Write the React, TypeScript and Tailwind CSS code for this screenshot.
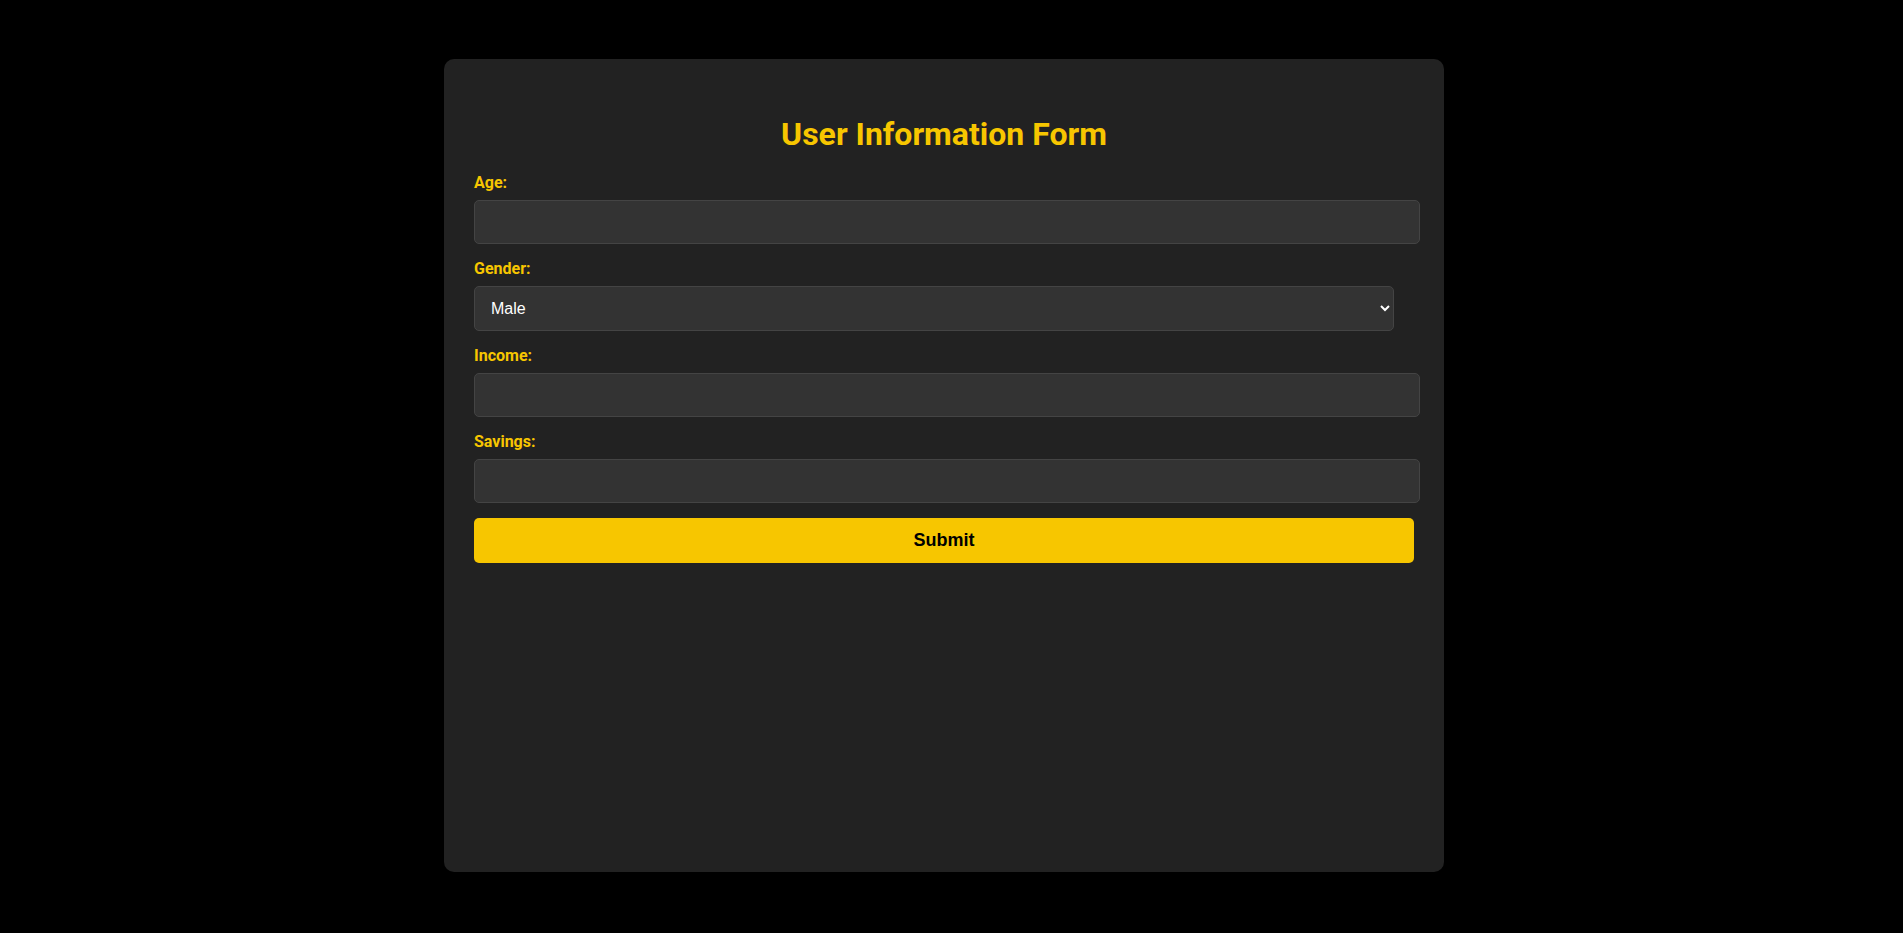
import { useState } from 'react';

const fields = ['Age', 'Income', 'Savings'];

const Field = ({ label }: { label: string }) => {
  return (
    <div className="mb-[15px]">
      <label className="block text-[16px] leading-[20px] font-bold text-[#f7c600] mb-[7px]">{label}:</label>
      <input
        type="text"
        className="block w-[946px] h-[44px] px-3 bg-[#333333] border border-[#444444] rounded-[5px] text-white outline-none font-['Liberation_Sans',Arial,sans-serif]"
      />
    </div>
  );
};

export default function App() {
  const [gender, setGender] = useState('Male');

  return (
    <div className="min-h-[933px] w-full bg-black pt-[59px] font-['Roboto',sans-serif]">
      <div className="ml-[444px] w-[1000px] h-[813px] bg-[#222222] rounded-[10px] px-[30px] pt-[56px]">
        <h2 className="text-center text-[32px] leading-[38px] font-bold text-[#f7c600] mb-[20px]">User Information Form</h2>
        <form onSubmit={(e) => e.preventDefault()}>
          <Field label={fields[0]} />
          <div className="mb-[15px]">
            <label className="block text-[16px] leading-[20px] font-bold text-[#f7c600] mb-[7px]">Gender:</label>
            <select
              value={gender}
              onChange={(e) => setGender(e.target.value)}
              className="block w-[920px] h-[45px] pl-3 pr-2 bg-[#333333] border border-[#444444] rounded-[5px] text-white text-[16px] outline-none font-['Liberation_Sans',Arial,sans-serif]"
            >
              <option>Male</option>
              <option>Female</option>
              <option>Other</option>
            </select>
          </div>
          <Field label={fields[1]} />
          <Field label={fields[2]} />
          <button
            type="submit"
            className="block w-[940px] h-[45px] bg-[#f7c600] rounded-[5px] text-black text-[18px] font-bold font-['Liberation_Sans',Arial,sans-serif]"
          >
            Submit
          </button>
        </form>
      </div>
    </div>
  );
}
